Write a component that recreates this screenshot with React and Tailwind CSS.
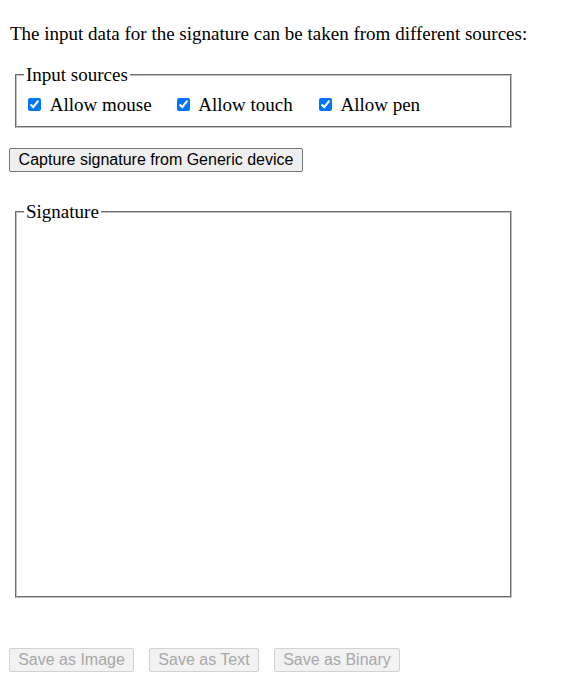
import { useState } from 'react';

const serif = "font-['Liberation_Serif','Times_New_Roman',serif]";
const sans = "font-['Liberation_Sans',Arial,sans-serif]";

function Check({ label, checked, onChange, className }) {
  return (
    <label className={className}>
      <input
        type="checkbox"
        checked={checked}
        onChange={onChange}
        className="w-[13px] h-[13px] mt-[3px] mb-[3px] ml-[4px] mr-[5px] accent-[#0075ff]"
      />{' '}
      {label}
    </label>
  );
}

export default function App() {
  const [mouse, setMouse] = useState(true);
  const [touch, setTouch] = useState(true);
  const [pen, setPen] = useState(true);

  return (
    <div className={`px-2 pt-2 pb-4 bg-white text-black text-[19px] leading-[21px] ${serif}`}>
      <p className="mt-[15px] pl-[2px]">The input data for the signature can be taken from different sources:</p>

      <fieldset className="mt-[20px] ml-[7px] w-[497px] border-2 [border-style:groove] border-[#c0c0c0] pl-[7px] pr-3 pt-[9px] pb-[11px]">
        <legend className="px-[2px] leading-[21px]">Input sources</legend>
        <div className="leading-[21px] whitespace-nowrap">
          <Check label="Allow mouse" checked={mouse} onChange={() => setMouse(!mouse)} />
          <Check label="Allow touch" checked={touch} onChange={() => setTouch(!touch)} className="ml-[21px]" />
          <Check label="Allow pen" checked={pen} onChange={() => setPen(!pen)} className="ml-[22px]" />
        </div>
      </fieldset>

      <button className={`mt-[20px] ml-[1px] block w-[294px] h-[24px] bg-[#efefef] border border-[#767676] rounded-[2px] text-[16px] leading-[20px] text-black ${sans}`}>
        Capture signature from Generic device
      </button>

      <fieldset className="mt-[29px] ml-[7px] w-[497px] h-[397px] border-2 [border-style:groove] border-[#c0c0c0] pl-[7px] pr-3">
        <legend className="px-[2px] leading-[21px]">Signature</legend>
      </fieldset>

      <div className={`mt-[50px] ml-[1px] flex gap-[15px] text-[16px] ${sans}`}>
        <button disabled className="w-[125px] h-[24px] bg-[#f2f2f2] border border-[#d2d2d2] rounded-[2px] text-[#a8a8a8] leading-[20px]">
          Save as Image
        </button>
        <button disabled className="w-[110px] h-[24px] bg-[#f2f2f2] border border-[#d2d2d2] rounded-[2px] text-[#a8a8a8] leading-[20px]">
          Save as Text
        </button>
        <button disabled className="w-[126px] h-[24px] bg-[#f2f2f2] border border-[#d2d2d2] rounded-[2px] text-[#a8a8a8] leading-[20px]">
          Save as Binary
        </button>
      </div>
    </div>
  );
}
